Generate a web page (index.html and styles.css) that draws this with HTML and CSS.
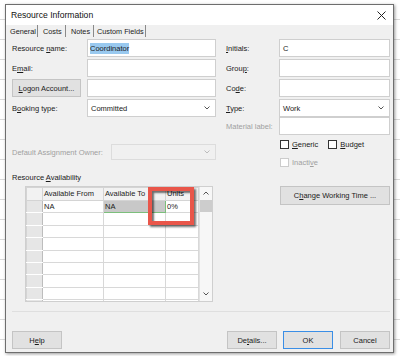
FILE: index.html
```html
<!DOCTYPE html>
<html lang="en">
<head>
  <meta charset="UTF-8" />
  <title>Resource Information</title>
  <link rel="stylesheet" href="styles.css">
</head>
<body>
  <div class="dialog">
    <!-- Title bar -->
    <div class="titlebar">
      <span class="title">Resource Information</span>
      <svg class="close" width="9" height="9" viewBox="0 0 9 9"><path d="M0.5 0.5 L8.5 8.5 M8.5 0.5 L0.5 8.5" stroke="#222" stroke-width="1"/></svg>
    </div>

    <!-- Tabs -->
    <div class="tabs">
      <span class="tab tab-general">General</span>
      <span class="tab tab-costs">Costs</span>
      <span class="tab tab-notes">Notes</span>
      <span class="tab tab-custom">Custom Fields</span>
    </div>

    <!-- General tab -->
    <div class="panel">
      <div class="col left">
        <div class="row">
          <span class="lbl">Resource <u>n</u>ame:</span>
          <span class="field"><span class="selected">Coordinator</span></span>
        </div>
        <div class="row">
          <span class="lbl">E<u>m</u>ail:</span>
          <span class="field"></span>
        </div>
        <div class="row">
          <span class="lbl"><span class="btn logon"><span><u>L</u>ogon Account...</span></span></span>
          <span class="field"></span>
        </div>
        <div class="row row-booking">
          <span class="lbl">B<u>o</u>oking type:</span>
          <span class="field select">Committed<svg class="chev" width="6" height="4" viewBox="0 0 6 4"><path d="M0.5 0.5 L3 3 L5.5 0.5" fill="none" stroke="#555"/></svg></span>
        </div>
        <div class="row row-owner">
          <span class="lbl lbl-owner disabled">Default Assignment Owner:</span>
          <span class="field select off"><svg class="chev" width="6" height="4" viewBox="0 0 6 4"><path d="M0.5 0.5 L3 3 L5.5 0.5" fill="none" stroke="#bbb"/></svg></span>
        </div>
        <div class="section-title">Resource <u>A</u>vailability</div>

        <div class="grid-wrap">
          <div class="grid">
            <table class="avail">
              <tr class="head">
                <td class="rh"></td><td>Available From</td><td>Available To</td><td>Units</td>
              </tr>
              <tr class="sel">
                <td class="rh"></td><td class="from">NA</td><td class="to">NA</td><td class="units">0%</td>
              </tr>
              <tr><td class="rh"></td><td></td><td></td><td></td></tr>
              <tr><td class="rh"></td><td></td><td></td><td></td></tr>
              <tr><td class="rh"></td><td></td><td></td><td></td></tr>
              <tr><td class="rh"></td><td></td><td></td><td></td></tr>
              <tr><td class="rh"></td><td></td><td></td><td></td></tr>
              <tr><td class="rh"></td><td></td><td></td><td></td></tr>
              <tr><td class="rh"></td><td></td><td></td><td></td></tr>
              <tr><td class="rh"></td><td></td><td></td><td></td></tr>
            </table>
            <div class="scrollbar">
              <svg width="6" height="4" viewBox="0 0 6 4"><path d="M0.5 3.5 L3 1 L5.5 3.5" fill="none" stroke="#555"/></svg>
              <div class="thumb"></div>
              <svg class="down" width="6" height="4" viewBox="0 0 6 4"><path d="M0.5 0.5 L3 3 L5.5 0.5" fill="none" stroke="#555"/></svg>
            </div>
          </div>
          <!-- annotation -->
          <div class="callout"></div>
        </div>
      </div>

      <div class="col right">
        <div class="row">
          <span class="lbl"><u>I</u>nitials:</span>
          <span class="field">C</span>
        </div>
        <div class="row">
          <span class="lbl">Grou<u>p</u>:</span>
          <span class="field"></span>
        </div>
        <div class="row">
          <span class="lbl">Co<u>d</u>e:</span>
          <span class="field"></span>
        </div>
        <div class="row row-type">
          <span class="lbl"><u>T</u>ype:</span>
          <span class="field select">Work<svg class="chev" width="6" height="4" viewBox="0 0 6 4"><path d="M0.5 0.5 L3 3 L5.5 0.5" fill="none" stroke="#555"/></svg></span>
        </div>
        <div class="row row-material">
          <span class="lbl disabled">Material label:</span>
          <span class="field"></span>
        </div>
        <div class="checks">
          <span class="check"><span class="box"></span><span><u>G</u>eneric</span></span>
          <span class="check"><span class="box"></span><span><u>B</u>udget</span></span>
        </div>
        <div class="checks inactive">
          <span class="check disabled"><span class="box"></span><span>Inacti<u>v</u>e</span></span>
        </div>
        <span class="btn working"><span>C<u>h</u>ange Working Time ...</span></span>
      </div>
    </div>

    <div class="separator"></div>

    <!-- Footer buttons -->
    <div class="footer">
      <span class="btn"><span>H<u>e</u>lp</span></span>
      <span class="spacer"></span>
      <span class="btn"><span>De<u>t</u>ails...</span></span>
      <span class="btn ok">OK</span>
      <span class="btn">Cancel</span>
    </div>
  </div>
</body>
</html>
```

FILE: styles.css
```css
/* Reset */
* {
  margin: 0;
  padding: 0;
  box-sizing: border-box;
}
body {
  width: 400px;
  height: 356px;
  overflow: hidden;
  padding: 4px 0 0 5px;
  font-family: "Liberation Sans", Arial, sans-serif;
  font-size: 7.5px;
  color: #1b1b1b;
  background: #fff repeating-linear-gradient(to bottom, transparent 0 19px, #dadada 19px 20px);
}
u {
  text-decoration-thickness: 1px;
  text-underline-offset: 1px;
}

/* Dialog frame */
.dialog {
  width: 389px;
  height: 349px;
  display: flex;
  flex-direction: column;
  background: #f0f0f0;
  border: 1px solid #6e6e6e;
  box-shadow: 1px 1px 3px rgba(0, 0, 0, 0.4);
}
.titlebar {
  height: 20px;
  display: flex;
  align-items: center;
  justify-content: space-between;
  padding: 0 7px 0 5px;
  background: #fff;
}
.title {
  font-size: 8.6px;
  color: #111;
}

/* Tabs */
.tabs {
  height: 12px;
  display: flex;
  padding-left: 3px;
}
.tab {
  display: flex;
  align-items: center;
  padding-left: 1px;
  font-size: 7.3px;
  border-right: 1px solid #8a8a8a;
}
.tab-general { width: 29px; }
.tab-costs { width: 28px; padding-left: 5px; }
.tab-notes { width: 28px; padding-left: 5px; }
.tab-custom { width: 52px; padding-left: 3px; }

/* Panel */
.panel {
  height: 274px;
  display: grid;
  grid-template-columns: 204px 164px;
  column-gap: 10px;
  padding: 2px 0 0 6px;
}
.col {
  display: flex;
  flex-direction: column;
}
.row {
  height: 18px;
  display: flex;
  align-items: center;
  margin-bottom: 2px;
}
.left .lbl { width: 75px; flex: none; }
.right .lbl { width: 53px; flex: none; }
.field {
  flex: 1;
  height: 100%;
  display: flex;
  align-items: center;
  padding: 0 3px;
  background: #fff;
  border: 1px solid #cfcfcf;
}
.selected {
  background: #99c9ef;
  padding: 1px 0;
  margin-left: -1px;
}
.select {
  justify-content: space-between;
  padding-right: 5px;
}
.select .chev { margin-left: auto; }
.select.off {
  background: #f0f0f0;
  border-color: #dcdcdc;
}
.disabled { color: #a0a0a0; }

.row-type, .row-booking { margin-bottom: 0; }
.row-owner {
  height: 16px;
  margin-top: 27px;
}
.left .lbl-owner { width: 99px; }

.section-title {
  margin-top: 10px;
  height: 11px;
  line-height: 11px;
}

/* Buttons */
.btn {
  display: flex;
  align-items: center;
  justify-content: center;
  height: 18px;
  width: 50px;
  background: #e1e1e1;
  border: 1px solid #c4c4c4;
  color: #1b1b1b;
}
.btn.logon {
  width: 69px;
  height: 18px;
}
.btn.ok {
  border-color: #3a8ee6;
  margin: 0 7px 0 6px;
}
.btn.working {
  width: 110px;
  height: 19px;
  margin: 19px 0 0 54px;
}

/* Availability grid */
.grid-wrap {
  position: relative;
  width: 188px;
  margin: 3px 0 0 13px;
}
.grid {
  height: 116px;
  display: flex;
  overflow: hidden;
  background: #fff;
  border: 1px solid #cfcfcf;
}
.avail {
  width: 175px;
  border-collapse: collapse;
  table-layout: fixed;
}
.avail td {
  height: 12.4px;
  padding: 0 1px;
  border: 1px solid #d8d8d8;
  white-space: nowrap;
  overflow: hidden;
  line-height: 10px;
}
.avail td:nth-child(1) { width: 16px; }
.avail td:nth-child(2) { width: 61px; }
.avail td:nth-child(3) { width: 62px; }
.avail .head td {
  height: 13px;
  background: #f2f2f2;
  border-color: #d4d4d4;
}
.avail .rh {
  background: #e6e6e6;
  border-color: #fff #bdbdbd #fff #d4d4d4;
}
.avail .sel .from { border-left: 1px solid #7cbf7c; }
.avail .sel .to {
  background: #c8c8c8;
  border: 1px solid #7cbf7c;
}
.avail .sel .units { border-left: 1px solid #7cbf7c; }

.scrollbar {
  width: 13px;
  display: flex;
  flex-direction: column;
  align-items: center;
  padding-top: 4px;
  background: #f7f7f7;
  border-left: 1px solid #e2e2e2;
}
.thumb {
  width: 12px;
  height: 12px;
  margin-top: 5px;
  background: #cdcdcd;
}
.scrollbar .down {
  margin-top: auto;
  margin-bottom: 5px;
}

/* Red annotation box */
.callout {
  position: absolute;
  left: 123px;
  top: 1px;
  width: 46px;
  height: 38px;
  border: 4px solid #e9564a;
  box-shadow: 2px 2px 2px rgba(0, 0, 0, 0.55), inset 2px 2px 2px rgba(0, 0, 0, 0.55);
}

/* Right column extras */
.row-material { margin-bottom: 0; }
.checks {
  display: flex;
  gap: 10px;
  margin: 4px 0 0 54px;
  height: 10px;
}
.checks.inactive { margin-top: 8px; }
.check {
  display: flex;
  align-items: center;
  gap: 3px;
}
.box {
  width: 9px;
  height: 9px;
  background: #fff;
  border: 1px solid #333;
}
.check.disabled .box { border-color: #cccccc; }

/* Footer */
.separator {
  height: 1px;
  margin: 0 3px 0 6px;
  background: #dfdfdf;
}
.footer {
  display: flex;
  padding: 19px 3px 3px 6px;
}
.spacer { flex: 1; }
```
